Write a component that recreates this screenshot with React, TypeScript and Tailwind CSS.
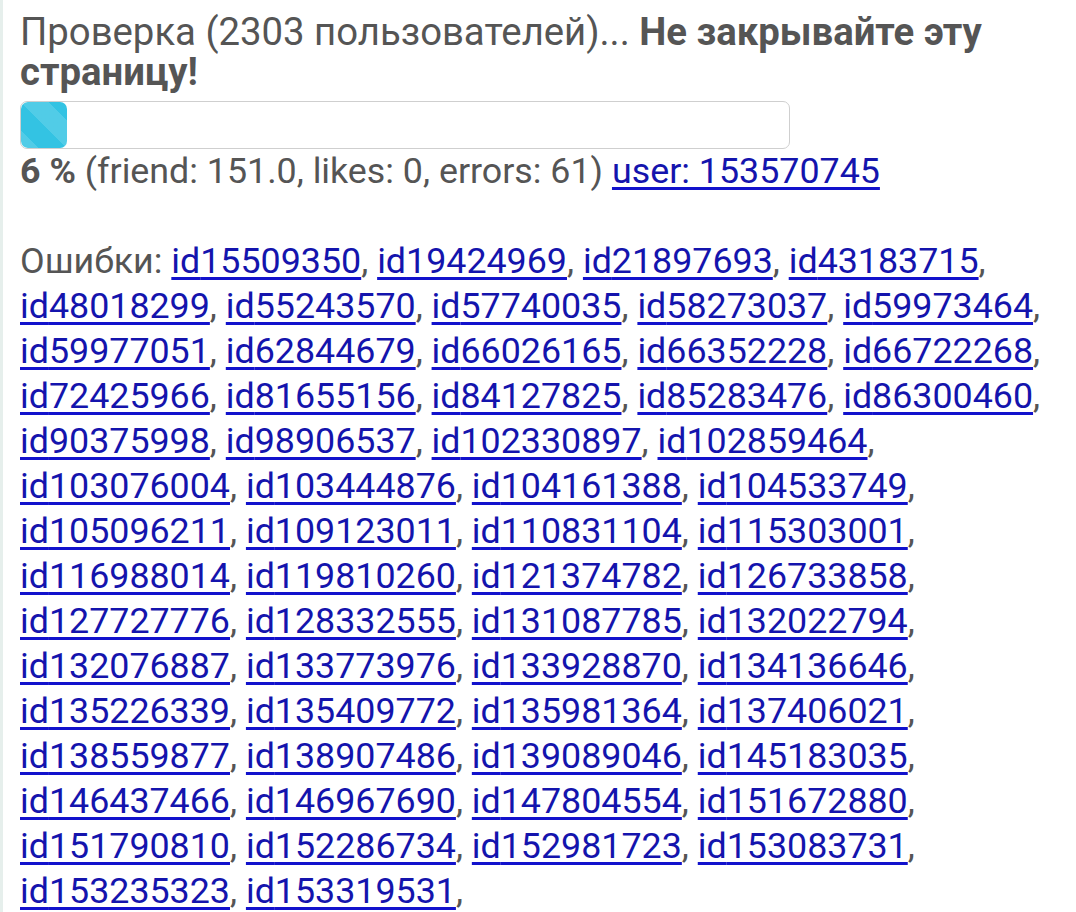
const errorIds = [
  "15509350", "19424969", "21897693", "43183715", "48018299", "55243570",
  "57740035", "58273037", "59973464", "59977051", "62844679", "66026165",
  "66352228", "66722268", "72425966", "81655156", "84127825", "85283476",
  "86300460", "90375998", "98906537", "102330897", "102859464", "103076004",
  "103444876", "104161388", "104533749", "105096211", "109123011", "110831104",
  "115303001", "116988014", "119810260", "121374782", "126733858", "127727776",
  "128332555", "131087785", "132022794", "132076887", "133773976", "133928870",
  "134136646", "135226339", "135409772", "135981364", "137406021", "138559877",
  "138907486", "139089046", "145183035", "146437466", "146967690", "147804554",
  "151672880", "151790810", "152286734", "152981723", "153083731", "153235323",
  "153319531",
];

const progress = 6;

function ProgressBar({ value }: { value: number }) {
  return (
    <div className="mt-[9px] h-[48px] w-[770px] rounded-[7px] border border-[#cfcfcf] bg-white overflow-hidden">
      <div
        className="h-full rounded-[7px] bg-[#33c3e3] bg-[linear-gradient(45deg,rgba(255,255,255,.15)_25%,transparent_25%,transparent_50%,rgba(255,255,255,.15)_50%,rgba(255,255,255,.15)_75%,transparent_75%,transparent)] bg-[length:56px_56px]"
        style={{ width: `${value}%` }}
      />
    </div>
  );
}

export default function App() {
  return (
    <div className="min-h-screen bg-white border-l-[3px] border-[#e6efec] pl-[17px] pr-[20px] font-['Roboto',sans-serif] text-[35.8px] text-[#555555]">
      <div className="pt-[12px] text-[38.3px] leading-[40px]">
        Проверка (2303 пользователей)... <b className="font-bold">Не закрывайте эту страницу!</b>
      </div>
      <ProgressBar value={progress} />
      <div className="leading-[45px]">
        <b className="font-bold">{progress} %</b> (friend: 151.0, likes: 0, errors: 61){" "}
        <a href="#" className="text-[#1414ad] underline decoration-[#1212cc] decoration-[3px] underline-offset-[4px]">
          user: 153570745
        </a>
      </div>
      <div className="mt-[45px] leading-[45px]">
        Ошибки:{" "}
        {errorIds.map((id) => (
          <span key={id}>
            <a href="#" className="text-[#1414ad] underline decoration-[#1212cc] decoration-[3px] underline-offset-[4px]">
              id{id}
            </a>
            ,{" "}
          </span>
        ))}
      </div>
    </div>
  );
}
